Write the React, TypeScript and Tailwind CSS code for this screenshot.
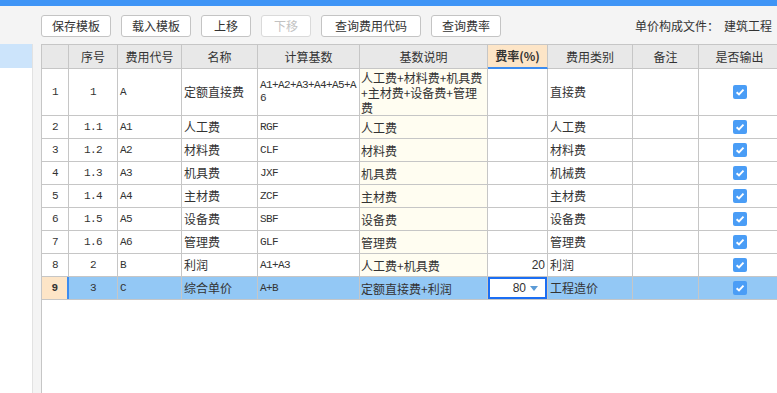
import { ReactNode } from 'react'

const cjk = "font-['Noto_Sans_CJK_SC',sans-serif]"
const mono = "font-['Liberation_Mono',monospace] text-[11px] tracking-[-0.6px]"

const widths = [27, 49, 64, 76, 102, 128, 60, 85, 66, 82]
const headers = ['', '序号', '费用代号', '名称', '计算基数', '基数说明', '费率(%)', '费用类别', '备注', '是否输出']

type Row = {
  n: string
  xh: string
  code: string
  name: string
  base: string[]
  desc: string[]
  rate: string
  type: string
}

const rows: Row[] = [
  { n: '1', xh: '1', code: 'A', name: '定额直接费', base: ['A1+A2+A3+A4+A5+A', '6'], desc: ['人工费+材料费+机具费', '+主材费+设备费+管理', '费'], rate: '', type: '直接费' },
  { n: '2', xh: '1.1', code: 'A1', name: '人工费', base: ['RGF'], desc: ['人工费'], rate: '', type: '人工费' },
  { n: '3', xh: '1.2', code: 'A2', name: '材料费', base: ['CLF'], desc: ['材料费'], rate: '', type: '材料费' },
  { n: '4', xh: '1.3', code: 'A3', name: '机具费', base: ['JXF'], desc: ['机具费'], rate: '', type: '机械费' },
  { n: '5', xh: '1.4', code: 'A4', name: '主材费', base: ['ZCF'], desc: ['主材费'], rate: '', type: '主材费' },
  { n: '6', xh: '1.5', code: 'A5', name: '设备费', base: ['SBF'], desc: ['设备费'], rate: '', type: '设备费' },
  { n: '7', xh: '1.6', code: 'A6', name: '管理费', base: ['GLF'], desc: ['管理费'], rate: '', type: '管理费' },
  { n: '8', xh: '2', code: 'B', name: '利润', base: ['A1+A3'], desc: ['人工费+机具费'], rate: '20', type: '利润' },
  { n: '9', xh: '3', code: 'C', name: '综合单价', base: ['A+B'], desc: ['定额直接费+利润'], rate: '80', type: '工程造价' },
]

function Checkbox() {
  return (
    <svg width="14" height="14" viewBox="0 0 14 14">
      <rect width="14" height="14" rx="2" fill="#4a9df6" />
      <path d="M3.6 7.2 L6 9.5 L10.5 4.6" stroke="#fff" strokeWidth="1.9" fill="none" />
    </svg>
  )
}

function Cell({ w, className = '', children }: { w: number; className?: string; children?: ReactNode }) {
  return (
    <div
      className={`shrink-0 h-full flex items-center border-r border-[#c6c6c6] ${className}`}
      style={{ width: w }}
    >
      {children}
    </div>
  )
}

const buttons = [
  { label: '保存模板', w: 'w-[70px]' },
  { label: '载入模板', w: 'w-[70px]' },
  { label: '上移', w: 'w-[50px]' },
  { label: '下移', w: 'w-[50px]', disabled: true },
  { label: '查询费用代码', w: 'w-[100px]' },
  { label: '查询费率', w: 'w-[70px]' },
]

export default function App() {
  return (
    <div className={`w-[777px] h-[393px] overflow-hidden bg-[#f4f4f4] flex flex-col text-[#333] ${cjk}`}>
      <div className="h-[6px] bg-[#3f95f6] shrink-0" />

      <div className="h-[38px] shrink-0 flex items-center pl-[41px] pt-[1px] gap-[10px]">
        {buttons.map((b) => (
          <div
            key={b.label}
            className={`${b.w} h-[22px] flex items-center justify-center bg-white rounded-[3px] border text-[12px] ${
              b.disabled ? 'border-[#dadada] text-[#c2c2c2]' : 'border-[#c4c4c4] text-[#333]'
            }`}
          >
            {b.label}
          </div>
        ))}
        <div className="ml-auto pr-[5px] flex items-center text-[12px] text-[#333]">
          <span>单价构成文件：</span>
          <span className="ml-[5px]">建筑工程</span>
        </div>
      </div>

      <div className="flex-1 flex min-h-0">
        <div className="w-[33px] shrink-0 bg-white border-r border-[#e2e2e2]">
          <div className="h-[24px] bg-[#cce4fb]" />
        </div>
        <div className="w-[8px] shrink-0" />
        <div className="flex-1 bg-white border-l border-[#c6c6c6] overflow-hidden">
          <div className="flex h-[25px] border-t border-[#c6c6c6] bg-[#e8e8e8] text-[12px]">
            {headers.map((h, i) => (
              <Cell
                key={i}
                w={widths[i]}
                className={`justify-center ${
                  i === 6
                    ? 'bg-[#fde5c7] font-bold border-b-2 border-b-[#3c8cf0]'
                    : 'border-b border-b-[#c6c6c6]'
                }`}
              >
                {h}
              </Cell>
            ))}
          </div>

          {rows.map((r, idx) => {
            const sel = r.n === '9'
            const h = idx === 0 ? 'h-[47px]' : 'h-[23px]'
            return (
              <div
                key={r.n}
                className={`flex ${h} border-b border-[#c6c6c6] text-[12px] ${sel ? 'bg-[#93c8f5]' : ''}`}
              >
                <Cell
                  w={widths[0]}
                  className={`justify-center ${mono} ${
                    sel ? 'bg-[#fde5c7] font-bold border-r-2 border-r-[#3c8cf0]' : ''
                  }`}
                >
                  {r.n}
                </Cell>
                <Cell w={widths[1]} className={`justify-center ${mono}`}>
                  {r.xh}
                </Cell>
                <Cell w={widths[2]} className={`pl-[2px] ${mono}`}>
                  {r.code}
                </Cell>
                <Cell w={widths[3]} className="pl-[2px]">
                  {r.name}
                </Cell>
                <Cell w={widths[4]} className={`pl-[2px] ${mono}`}>
                  <div className="leading-[13px]">
                    {r.base.map((t) => (
                      <div key={t}>{t}</div>
                    ))}
                  </div>
                </Cell>
                <Cell w={widths[5]} className={`pl-[1px] ${sel ? '' : 'bg-[#fffdf1]'}`}>
                  <div className="leading-[15px] whitespace-nowrap">
                    {r.desc.map((t) => (
                      <div key={t}>{t}</div>
                    ))}
                  </div>
                </Cell>
                {sel ? (
                  <Cell w={widths[6]} className="p-0">
                    <div className="w-full h-full border-2 border-[#1b6ef3] bg-white flex items-center justify-end pr-[7px] font-['Liberation_Sans',sans-serif] text-[12px]">
                      <span>{r.rate}</span>
                      <svg width="8" height="5" viewBox="0 0 8 5" className="ml-[4px] mt-[1px]">
                        <polygon points="0,0 8,0 4,5" fill="#5b9bd6" />
                      </svg>
                    </div>
                  </Cell>
                ) : (
                  <Cell
                    w={widths[6]}
                    className="justify-end pr-[2px] font-['Liberation_Sans',sans-serif] text-[12px]"
                  >
                    {r.rate}
                  </Cell>
                )}
                <Cell w={widths[7]} className="pl-[2px]">
                  {r.type}
                </Cell>
                <Cell w={widths[8]} />
                <Cell w={widths[9]} className="justify-center">
                  <Checkbox />
                </Cell>
              </div>
            )
          })}
        </div>
      </div>
    </div>
  )
}
